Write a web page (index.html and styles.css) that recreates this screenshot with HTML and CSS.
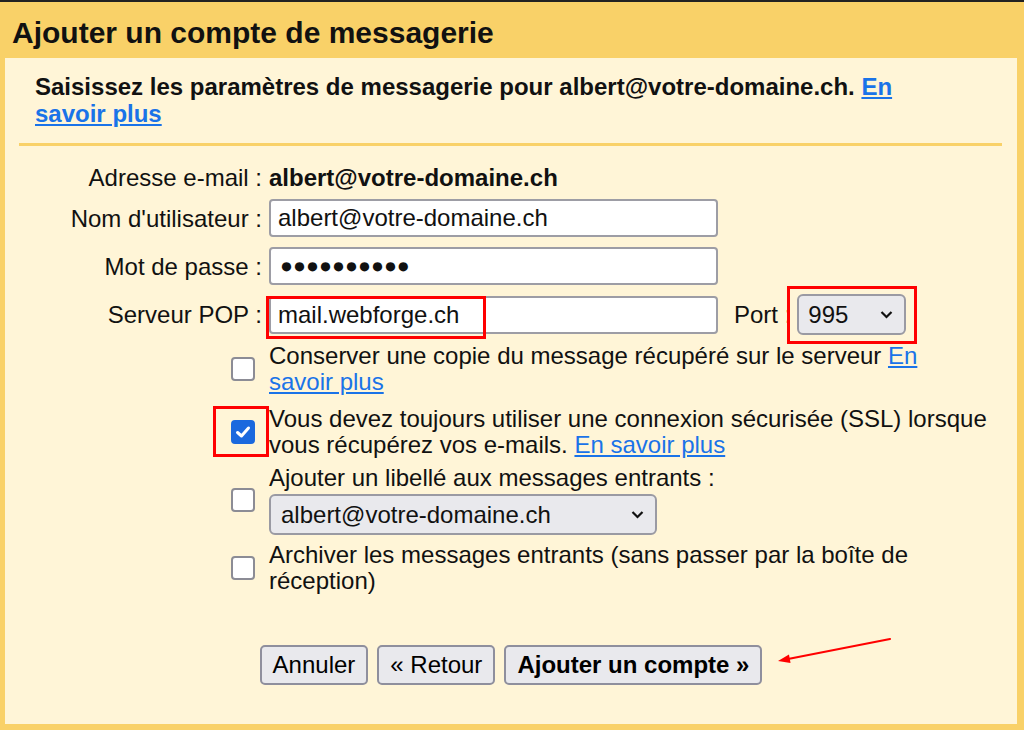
FILE: index.html
```html
<!DOCTYPE html>
<html lang="fr">
<head>
<meta charset="utf-8">
<title>Ajouter un compte de messagerie</title>
<link rel="stylesheet" href="styles.css">
</head>
<body>
<div class="dialog">
  <h1 class="title">Ajouter un compte de messagerie</h1>
  <div class="panel">
    <p class="intro">Saisissez les paramètres de messagerie pour albert@votre-domaine.ch. <a href="#">En savoir plus</a></p>
    <hr class="sep">
    <div class="form">
      <div class="row r1">
        <div class="label">Adresse e-mail :</div>
        <div class="value">albert@votre-domaine.ch</div>
      </div>
      <div class="row r2">
        <div class="label">Nom d'utilisateur :</div>
        <div class="field">albert@votre-domaine.ch</div>
      </div>
      <div class="row r3">
        <div class="label">Mot de passe :</div>
        <div class="field dots">●●●●●●●●●●</div>
      </div>
      <div class="row r4">
        <div class="label">Serveur POP :</div>
        <div class="ctrl">
          <div class="field">mail.webforge.ch</div>
          <span class="port-label">Port :</span>
          <div class="select port-select"><span>995</span><svg class="chev" width="13" height="9" viewBox="0 0 13 9"><path d="M1.5 2 L6.5 7 L11.5 2" fill="none" stroke="#111" stroke-width="2.2"/></svg></div>
        </div>
      </div>
      <div class="row check-row r5">
        <span class="box"></span>
        <div class="ctext">Conserver une copie du message récupéré sur le serveur <a href="#">En</a><br><a href="#">savoir plus</a></div>
      </div>
      <div class="row check-row r6">
        <span class="box checked"><svg width="20" height="20" viewBox="0 0 20 20"><path d="M4.5 10.5 L8.5 14 L15.5 6" fill="none" stroke="#fff" stroke-width="3" stroke-linecap="round" stroke-linejoin="round"/></svg></span>
        <div class="ctext">Vous devez toujours utiliser une connexion sécurisée (SSL) lorsque<br>vous récupérez vos e-mails. <a href="#">En savoir plus</a></div>
      </div>
      <div class="row check-row r7">
        <span class="box"></span>
        <div class="ctext">
          <div>Ajouter un libellé aux messages entrants :</div>
          <div class="select label-select"><span>albert@votre-domaine.ch</span><svg class="chev" width="13" height="9" viewBox="0 0 13 9"><path d="M1.5 2 L6.5 7 L11.5 2" fill="none" stroke="#111" stroke-width="2.2"/></svg></div>
        </div>
      </div>
      <div class="row check-row r8">
        <span class="box"></span>
        <div class="ctext">Archiver les messages entrants (sans passer par la boîte de<br>réception)</div>
      </div>
    </div>
    <div class="buttons">
      <button class="btn" type="button">Annuler</button>
      <button class="btn" type="button">« Retour</button>
      <button class="btn primary" type="button">Ajouter un compte »</button>
    </div>
  </div>

  <div class="mark mark-pop"></div>
  <div class="mark mark-port"></div>
  <div class="mark mark-ssl"></div>
  <svg class="arrow" width="130" height="40" viewBox="0 0 130 40">
    <line x1="120" y1="9" x2="18" y2="29" stroke="#f00" stroke-width="2.2" stroke-linecap="round"/>
    <polygon points="8,31 20.6,33 19,24.6" fill="#f00"/>
  </svg>
</div>
</body>
</html>
```

FILE: styles.css
```css
* { box-sizing: border-box; }
html, body { margin: 0; padding: 0; }
body {
  font-family: "Liberation Sans", Arial, sans-serif;
  color: #111;
  background: #f9d168;
}
.dialog {
  position: relative;
  height: 730px;
  display: flex;
  flex-direction: column;
  background: #f9d168;
  border-top: 2px solid #222;
}
.title {
  margin: 0;
  padding: 6px 12px 0;
  height: 56px;
  line-height: 50px;
  font-size: 30px;
  font-weight: bold;
  color: #111;
}
.panel {
  flex: 1;
  margin: 0 7px 6px 5px;
  background: #fff5d7;
}
.intro {
  margin: 15px 0 0 30px;
  max-width: 880px;
  font-size: 24px;
  font-weight: bold;
  line-height: 27px;
}
a { color: #1a73e8; text-decoration: underline; }
.sep {
  margin: 16px 15px 0 14px;
  height: 3px;
  border: 0;
  background: #f9d168;
}
.form { margin-top: 18px; }
.row {
  display: grid;
  grid-template-columns: 257px 1fr;
  column-gap: 7px;
  align-items: center;
  font-size: 24px;
  line-height: 27px;
}
.label { text-align: right; white-space: nowrap; }
.value { font-weight: bold; font-size: 24px; }
.r2 { margin-top: 8px; }
.r3 { margin-top: 10px; }
.r4 { margin-top: 9px; }
.r5 { margin-top: 8px; }
.r6 { margin-top: 11px; }
.r7 { margin-top: 7px; }
.r8 { margin-top: 7px; }

.field {
  width: 449px;
  height: 38px;
  padding: 0 7px;
  border: 2px solid #9d9da5;
  border-radius: 4px;
  background: #fff;
  line-height: 34px;
  font-size: 24px;
  white-space: nowrap;
}
.dots {
  font-size: 21.5px;
  padding-left: 9px;
}
.ctrl { display: flex; align-items: center; }
.port-label { margin-left: 16px; }
.select {
  display: flex;
  align-items: center;
  justify-content: space-between;
  height: 41px;
  border: 2px solid #9a9aa3;
  border-radius: 6px;
  background: #e9e9ed;
  font-size: 24px;
  white-space: nowrap;
}
.port-select { width: 109px; margin-left: 6px; padding: 0 11px 0 9px; }
.label-select { width: 388px; margin-top: 3px; padding: 0 11px 0 10px; }
.chev { display: block; flex: none; }

.check-row { line-height: 26px; }
.box {
  justify-self: end;
  margin-right: 7px;
  width: 24px;
  height: 24px;
  border: 2px solid #8c8c95;
  border-radius: 4px;
  background: #fff;
  display: flex;
  align-items: center;
  justify-content: center;
}
.box.checked { background: #1b69de; border-color: #1b69de; }
.box svg { display: block; }
.ctext { white-space: nowrap; }

.buttons {
  display: flex;
  justify-content: center;
  gap: 9px;
  margin-top: 51px;
}
.btn {
  height: 40px;
  padding: 0 11px;
  border: 2px solid #8f8f9d;
  border-radius: 5px;
  background: #e9e9ed;
  color: #000;
  font-family: "Liberation Sans", Arial, sans-serif;
  font-size: 24px;
  line-height: 36px;
}
.btn.primary { font-weight: bold; }

.mark {
  position: absolute;
  border: 3px solid #f00;
}
.mark-pop { left: 266px; top: 294px; width: 220px; height: 43px; }
.mark-port { left: 787px; top: 284px; width: 130px; height: 58px; }
.mark-ssl { left: 213px; top: 404px; width: 56px; height: 51px; }
.arrow { position: absolute; left: 770px; top: 628px; }
```
